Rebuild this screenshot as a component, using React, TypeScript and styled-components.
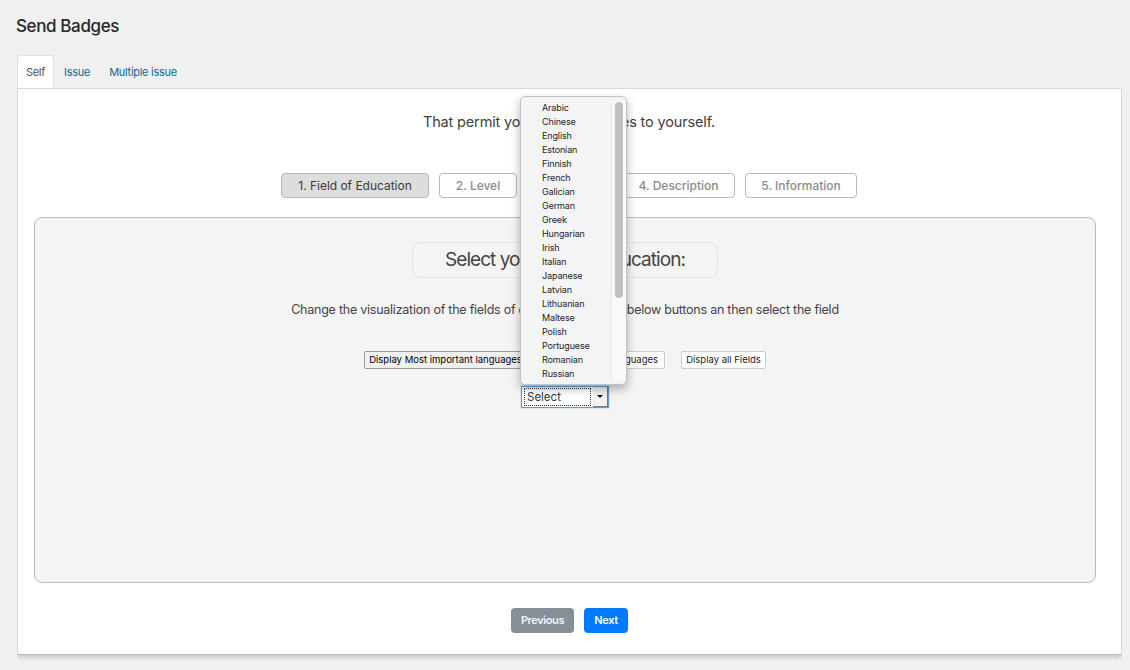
import React from "react";
import styled, { createGlobalStyle } from "styled-components";

const Global = createGlobalStyle`
  * { box-sizing: border-box; }
  body {
    margin: 0;
    background: #f0f0f0;
    color: #3c4043;
    font-family: Inter, "Liberation Sans", sans-serif;
  }
  button { font-family: inherit; margin: 0; padding: 0; white-space: nowrap; }
`;

const Page = styled.main`
  height: 670px;
  padding: 14px 8px 0 17px;
  overflow: hidden;
`;

const Title = styled.h1`
  margin: 0 0 0 -1px;
  height: 41px;
  font-size: 17px;
  line-height: 24px;
  font-weight: 500;
  letter-spacing: -0.38px;
  color: #23282d;
`;

const Tabs = styled.nav`
  display: flex;
  position: relative;
  height: 34px;
  margin-bottom: -1px;
`;

const Tab = styled.a<{ $active?: boolean; $width: number }>`
  width: ${(p) => p.$width}px;
  text-align: center;
  font-size: 11px;
  line-height: 33px;
  letter-spacing: -0.28px;
  color: ${(p) => (p.$active ? "#495057" : "#11689b")};
  background: ${(p) => (p.$active ? "#fff" : "transparent")};
  border: 1px solid ${(p) => (p.$active ? "#dee0e2" : "transparent")};
  border-bottom: 0;
  border-radius: 4px 4px 0 0;
  height: ${(p) => (p.$active ? 33 : 34)}px;
`;

const Panel = styled.section`
  display: flex;
  flex-direction: column;
  align-items: center;
  height: 567px;
  padding: 0 25px 0 16px;
  background: #fff;
  border: 1px solid #d8d8d8;
  border-bottom-color: #bcbcbc;
  box-shadow: 0 2px 5px rgba(0, 0, 0, 0.2);
  clip-path: inset(0 0 -10px 0);
`;

const Intro = styled.p`
  margin: 22px 0 0 8px;
  font-size: 14.5px;
  line-height: 22px;
  letter-spacing: -0.15px;
  color: #3f3f3f;
  white-space: nowrap;
`;

const Steps = styled.div`
  display: flex;
  gap: 10px;
  margin: 40px 0 0 8px;
`;

const Step = styled.button<{ $active?: boolean; $width: number }>`
  width: ${(p) => p.$width}px;
  height: 25px;
  font-size: 12px;
  line-height: 23px;
  font-weight: ${(p) => (p.$active ? 400 : 500)};
  letter-spacing: -0.02px;
  color: ${(p) => (p.$active ? "#3b3c3d" : "#8b8b8b")};
  background: ${(p) => (p.$active ? "#ddd" : "#fff")};
  border: 1px solid #b4b9be;
  border-radius: 4px;
`;

const FieldArea = styled.section`
  display: flex;
  flex-direction: column;
  align-items: center;
  align-self: flex-start;
  width: 1062px;
  height: 366px;
  margin-top: 19px;
  padding-top: 24px;
  background: #f4f4f4;
  border: 1px solid #bbb;
  border-radius: 8px;
`;

const Heading = styled.h2`
  width: 306px;
  height: 36px;
  margin: 0;
  text-align: center;
  font-size: 19px;
  line-height: 33px;
  font-weight: 400;
  letter-spacing: -0.95px;
  color: #444;
  border: 1px solid #e3e3e3;
  border-radius: 8px;
  white-space: nowrap;
`;

const Hint = styled.p`
  margin: 22px 0 0;
  font-size: 12.5px;
  line-height: 20px;
  letter-spacing: -0.24px;
  color: #444;
  white-space: nowrap;
`;

const Filters = styled.div`
  display: flex;
  gap: 16px;
  margin-top: 31px;
`;

const Filter = styled.button<{ $pressed?: boolean; $width: number }>`
  width: ${(p) => p.$width}px;
  height: 18px;
  font-size: 9.5px;
  line-height: 16px;
  letter-spacing: 0;
  color: ${(p) => (p.$pressed ? "#000" : "#222")};
  background: ${(p) => (p.$pressed ? "#f0f0f0" : "#fff")};
  border: 1px solid ${(p) => (p.$pressed ? "#999" : "#ccc")};
  border-radius: 2px;
`;

const Picker = styled.div`
  display: flex;
  position: relative;
  width: 88px;
  height: 22px;
  margin-top: 17px;
  background: #fff;
  border: 1px solid #5b9dd9;
  box-shadow: 0 0 1px #5b9dd9;
`;

const PickerValue = styled.span`
  width: 67px;
  height: 18px;
  margin: 1px 0 0 2px;
  padding-left: 2px;
  font-size: 11.5px;
  line-height: 16px;
  color: #32373c;
  border: 1px dotted #333;
`;

const PickerArrow = styled.span`
  flex: 1;
  display: flex;
  align-items: center;
  justify-content: center;
  margin-left: 2px;
  background: #f2f2f2;
  border-right: 1px solid #777;
  border-bottom: 1px solid #777;
`;

const Menu = styled.div`
  position: absolute;
  left: -2px;
  bottom: 22px;
  display: flex;
  width: 107px;
  height: 289px;
  padding: 4px 0 4px 21px;
  background: #f4f4f4;
  border: 1px solid #c2c2c2;
  border-radius: 5px;
  box-shadow: 0 4px 10px rgba(0, 0, 0, 0.3);
`;

const Options = styled.ul`
  flex: 1;
  margin: 0;
  padding: 0;
  list-style: none;
`;

const Option = styled.li`
  height: 14px;
  font-size: 9px;
  line-height: 14px;
  letter-spacing: -0.13px;
  color: #222529;
`;

const Track = styled.div`
  width: 15px;
  padding-left: 3px;
  background: #fafafa;
  border-left: 1px solid #e8e8e8;
`;

const Thumb = styled.div`
  width: 8px;
  height: 196px;
  margin-top: 1px;
  border-radius: 4px;
  background: #c1c1c1;
`;

const Actions = styled.div`
  display: flex;
  gap: 10px;
  margin: 25px 0 0 9px;
`;

const Action = styled.button<{ $primary?: boolean; $width: number }>`
  width: ${(p) => p.$width}px;
  height: 25px;
  font-size: 11px;
  line-height: 25px;
  font-weight: 600;
  letter-spacing: -0.4px;
  color: ${(p) => (p.$primary ? "#fff" : "#f4f5f6")};
  background: ${(p) => (p.$primary ? "#007bff" : "#868e96")};
  border: 0;
  border-radius: 4px;
`;

const languages = [
  "Arabic", "Chinese", "English", "Estonian", "Finnish", "French", "Galician",
  "German", "Greek", "Hungarian", "Irish", "Italian", "Japanese", "Latvian",
  "Lithuanian", "Maltese", "Polish", "Portuguese", "Romanian", "Russian",
];

export default function App() {
  return (
    <Page>
      <Global />
      <Title>Send Badges</Title>
      <Tabs>
        <Tab $active $width={37}>Self</Tab>
        <Tab $width={46}>Issue</Tab>
        <Tab $width={86}>Multiple issue</Tab>
      </Tabs>
      <Panel>
        <Intro>That permit you to send badges to yourself.</Intro>
        <Steps>
          <Step $active $width={148}>1. Field of Education</Step>
          <Step $width={78}>2. Level</Step>
          <Step $width={85}>3. Badge</Step>
          <Step $width={113}>4. Description</Step>
          <Step $width={112}>5. Information</Step>
        </Steps>
        <FieldArea>
          <Heading>Select your field of education:</Heading>
          <Hint>
            Change the visualization of the fields of education with the below buttons an then select the field
          </Hint>
          <Filters>
            <Filter $pressed $width={163}>Display Most important languages</Filter>
            <Filter $width={122}>Display other languages</Filter>
            <Filter $width={85}>Display all Fields</Filter>
          </Filters>
          <Picker>
            <PickerValue>Select</PickerValue>
            <PickerArrow>
              <svg width="6" height="3" viewBox="0 0 6 3"><path d="M0 0h6L3 3z" fill="#111" /></svg>
            </PickerArrow>
            <Menu>
              <Options>
                {languages.map((name) => (
                  <Option key={name}>{name}</Option>
                ))}
              </Options>
              <Track><Thumb /></Track>
            </Menu>
          </Picker>
        </FieldArea>
        <Actions>
          <Action $width={63}>Previous</Action>
          <Action $primary $width={44}>Next</Action>
        </Actions>
      </Panel>
    </Page>
  );
}
